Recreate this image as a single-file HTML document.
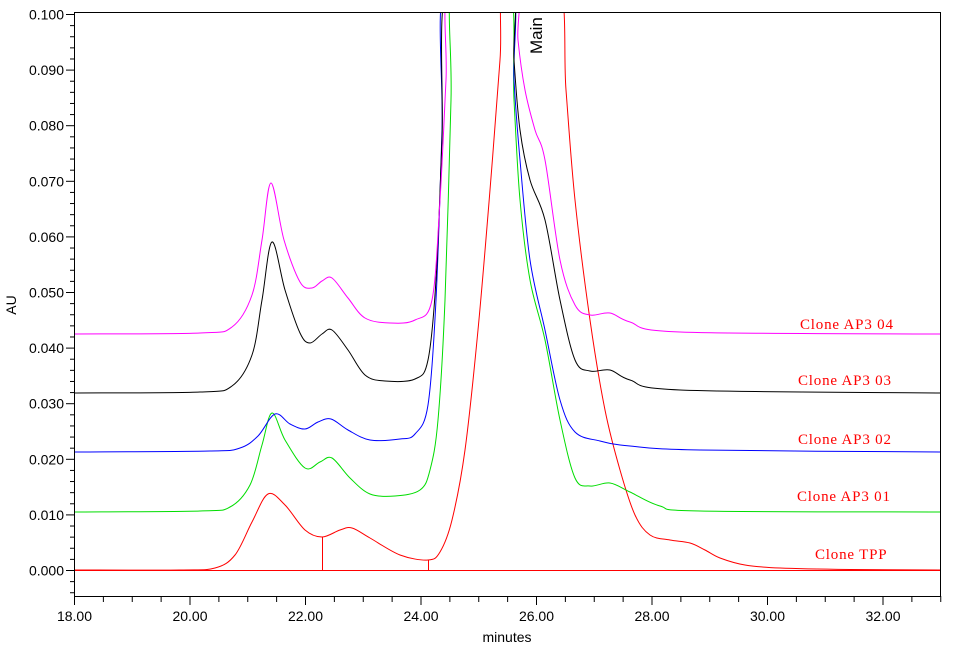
<!DOCTYPE html>
<html><head><meta charset="utf-8"><style>
html,body{margin:0;padding:0;background:#fff;}
svg{display:block;}
text{font-family:"Liberation Sans",sans-serif;}
.lab{font-family:"Liberation Serif",serif;fill:#f00;font-size:15px;letter-spacing:0.8px;}
</style></head><body>
<svg id="s" width="954" height="649" viewBox="0 0 954 649" xmlns="http://www.w3.org/2000/svg">
<defs><clipPath id="c"><rect x="75" y="13" width="865" height="583"/></clipPath></defs>
<rect x="74.5" y="12.5" width="866" height="584" fill="none" stroke="#000" stroke-width="1"/>
<g id="ticks" stroke="#000" stroke-width="1"></g>
<g id="tl" font-size="14" fill="#000"></g>
<text x="507" y="642" font-size="14" text-anchor="middle">minutes</text>
<text transform="translate(16,305) rotate(-90)" font-size="14" text-anchor="middle">AU</text>
<g clip-path="url(#c)" fill="none" stroke-width="1" id="tr">
<line x1="75" y1="570.5" x2="940" y2="570.5" stroke="#f00"/>
<line x1="322.5" y1="537" x2="322.5" y2="570" stroke="#f00"/>
<line x1="428.5" y1="560" x2="428.5" y2="570" stroke="#f00"/>
</g>
<text transform="translate(542,54) rotate(-90)" font-size="17" fill="#000">Main</text>
<text class="lab" x="800" y="329">Clone AP3 04</text>
<text class="lab" x="798" y="385">Clone AP3 03</text>
<text class="lab" x="798" y="444">Clone AP3 02</text>
<text class="lab" x="797" y="501">Clone AP3 01</text>
<text class="lab" x="815" y="559">Clone TPP</text>
</svg>
<script>
var NS="http://www.w3.org/2000/svg";
function el(n,a,p){var e=document.createElementNS(NS,n);for(var k in a)e.setAttribute(k,a[k]);p.appendChild(e);return e;}
var tk=document.getElementById('ticks'),tl=document.getElementById('tl');
function X(t){return 74.5+57.75*(t-18);}
for(var t=18;t<=33.01;t+=0.5){var x=X(t);var big=Math.abs(t-Math.round(t/2)*2)<0.01;el('line',{x1:x,y1:596,x2:x,y2:big?605:602},tk);
 if(big){var tx=el('text',{x:x,y:621,'text-anchor':'middle'},tl);tx.textContent=t.toFixed(2);}}
for(var i=-2;i<=50;i++){var v=i*0.002;var y=570.5-5560*v;if(y<12||y>596)continue;var big=i%5==0;el('line',{x1:big?66:70,y1:y,x2:74.5,y2:y},tk);
 if(big){var tx=el('text',{x:64,y:y+5,'text-anchor':'end'},tl);tx.textContent=v.toFixed(3);}}
function path(pts){var d="M"+pts[0][0]+","+pts[0][1];for(var i=0;i<pts.length-1;i++){var p0=pts[i>0?i-1:i],p1=pts[i],p2=pts[i+1],p3=pts[i+2<pts.length?i+2:i+1];
 var c1=[p1[0]+(p2[0]-p0[0])/6,p1[1]+(p2[1]-p0[1])/6],c2=[p2[0]-(p3[0]-p1[0])/6,p2[1]-(p3[1]-p1[1])/6];
 d+=" C"+c1[0]+","+c1[1]+" "+c2[0]+","+c2[1]+" "+p2[0]+","+p2[1];}return d;}
var tr=document.getElementById('tr');
var T=[
["#f00",[[75,570],[180,570],[215,568],[235,555],[252,522],[268,494],[285,505],[305,530],[322,537],[340,530],[352,528],[370,538],[400,555],[428,560],[440,552],[452,520],[465,450],[478,330],[490,190],[500,60],[506,-20],[558,-20],[566,90],[575,200],[590,320],[605,410],[620,470],[635,515],[650,535],[670,540],[690,543],[705,550],[720,558],[745,565],[780,568],[850,569.5],[940,570]]],
["#0d0",[[75,512],[200,511],[230,507],[250,485],[262,445],[272,413],[285,440],[305,468],[320,462],[332,458],[350,478],[370,494],[395,496],[420,490],[430,470],[438,420],[445,300],[451,100],[454,-20],[508,-20],[514,100],[520,200],[530,280],[545,340],[560,420],[575,478],[590,486],[610,483],[630,492],[660,506],[700,511],[940,512]]],
["#00f",[[75,452],[210,451],[240,448],[258,436],[275,414],[290,424],[305,429],[318,422],[331,419],[348,430],[370,440],[400,439],[415,434],[428,405],[436,300],[442,130],[446,-20],[510,-20],[514,80],[520,160],[530,260],[545,330],[560,400],[575,432],[600,441],[630,446],[700,450],[940,452]]],
["#000",[[75,393],[200,392],[232,386],[252,355],[262,300],[272,242],[285,290],[300,333],[310,343],[322,334],[332,330],[348,350],[365,375],[385,381],[415,379],[428,360],[436,280],[442,140],[448,-20],[510,-20],[514,60],[520,130],[530,180],[545,220],[560,300],[575,360],[590,371],[610,370],[630,380],[680,390],[940,393]]],
["#f0f",[[75,334],[200,333],[232,327],[252,295],[262,240],[271,183],[284,240],[300,282],[312,288],[322,281],[332,278],[348,298],[365,318],[390,323],[415,320],[432,300],[440,200],[446,80],[451,-20],[514,-20],[518,40],[525,90],[535,130],[545,160],[560,260],[575,305],[590,315],[610,313],[630,322],[680,332],[940,334]]]
];
T.forEach(function(a){el('path',{d:path(a[1]),stroke:a[0]},tr);});
</script>
</body></html>
